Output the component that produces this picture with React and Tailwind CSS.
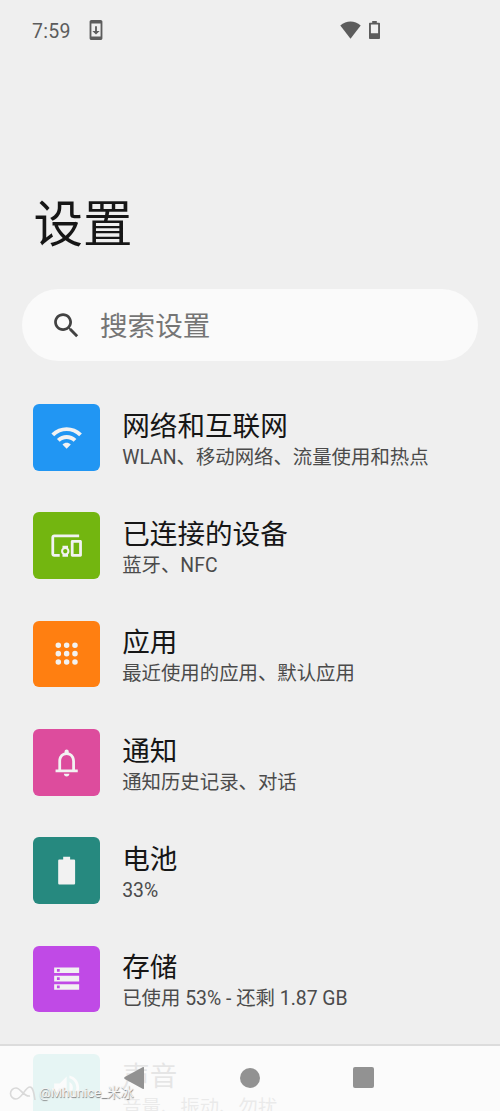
import { clsx } from "clsx";

const icons = {
  wifi: "M1 9l2 2c4.97-4.97 13.03-4.97 18 0l2-2C16.93 2.93 7.08 2.93 1 9zm8 8l3 3 3-3c-1.65-1.66-4.34-1.66-6 0zm-4-4l2 2c2.76-2.76 7.24-2.76 10 0l2-2C15.14 9.14 8.87 9.14 5 13z",
  devices:
    "M3 6h18V4H3c-1.1 0-2 .9-2 2v12c0 1.1.9 2 2 2h4v-2H3V6zm10 6H9v1.78c-.61.55-1 1.33-1 2.22s.39 1.67 1 2.22V20h4v-1.78c.61-.55 1-1.34 1-2.22s-.39-1.67-1-2.22V12zm-2 5.5c-.83 0-1.5-.67-1.5-1.5s.67-1.5 1.5-1.5 1.5.67 1.5 1.5-.67 1.5-1.5 1.5zM22 8h-6c-.5 0-1 .5-1 1v10c0 .5.5 1 1 1h6c.5 0 1-.5 1-1V9c0-.5-.5-1-1-1zm-1 10h-4v-8h4v8z",
  apps: "M6 4a2 2 0 1 0 0 4a2 2 0 1 0 0-4zM12 4a2 2 0 1 0 0 4a2 2 0 1 0 0-4zM18 4a2 2 0 1 0 0 4a2 2 0 1 0 0-4zM6 10a2 2 0 1 0 0 4a2 2 0 1 0 0-4zM12 10a2 2 0 1 0 0 4a2 2 0 1 0 0-4zM18 10a2 2 0 1 0 0 4a2 2 0 1 0 0-4zM6 16a2 2 0 1 0 0 4a2 2 0 1 0 0-4zM12 16a2 2 0 1 0 0 4a2 2 0 1 0 0-4zM18 16a2 2 0 1 0 0 4a2 2 0 1 0 0-4z",
  bell: "M18 17v-6c0-3.07-1.63-5.64-4.5-6.32V4c0-.83-.67-1.5-1.5-1.5s-1.5.67-1.5 1.5v.68C7.64 5.36 6 7.92 6 11v6H4v2h16v-2h-2zm-2 0H8v-6c0-2.48 1.51-4.5 4-4.5s4 2.02 4 4.5v6zm-4 5c1.1 0 2-.9 2-2h-4c0 1.1.9 2 2 2z",
  battery: "M17.2 4H14.5V2h-5v2H6.8c-.5 0-.9.4-.9.9v16.2c0 .5.4.9.9.9h10.4c.5 0 .9-.4.9-.9V4.9c0-.5-.4-.9-.9-.9z",
  storage: "M3 20h18v-4H3v4zm2-3h2v2H5v-2zM3 4v4h18V4H3zm4 3H5V5h2v2zm-4 7h18v-4H3v4zm2-3h2v2H5v-2z",
  sound:
    "M3 9v6h4l5 5V4L7 9H3zM16.5 12c0-1.77-1.02-3.29-2.5-4.03v8.05c1.48-.73 2.5-2.25 2.5-4.02zM14 3.23v2.06c2.89.86 5 3.54 5 6.71s-2.11 5.85-5 6.71v2.06c4.01-.91 7-4.49 7-8.77s-2.99-7.86-7-8.77z",
  search:
    "M15.5 14h-.79l-.28-.27C15.41 12.59 16 11.11 16 9.5 16 5.91 13.09 3 9.5 3S3 5.91 3 9.5 5.91 16 9.5 16c1.61 0 3.09-.59 4.23-1.57l.27.28v.79l5 4.99L20.49 19l-4.99-5zm-6 0C7.01 14 5 11.99 5 9.5S7.01 5 9.5 5 14 7.01 14 9.5 11.99 14 9.5 14z",
  update:
    "M17 1H7c-1.1 0-2 .9-2 2v18c0 1.1.9 2 2 2h10c1.1 0 2-.9 2-2V3c0-1.1-.9-2-2-2zm0 18H7V5h10v14zm-1-6h-3V8h-2v5H8l4 4 4-4z",
};

const settings = [
  { title: "网络和互联网", summary: "WLAN、移动网络、流量使用和热点", icon: "wifi", color: "bg-[#2196f3]" },
  { title: "已连接的设备", summary: "蓝牙、NFC", icon: "devices", color: "bg-[#73b610]" },
  { title: "应用", summary: "最近使用的应用、默认应用", icon: "apps", color: "bg-[#ff7f11]" },
  { title: "通知", summary: "通知历史记录、对话", icon: "bell", color: "bg-[#dd4c9d]" },
  { title: "电池", summary: "33%", icon: "battery", color: "bg-[#26897f]" },
  { title: "存储", summary: "已使用 53% - 还剩 1.87 GB", icon: "storage", color: "bg-[#c04ae6]" },
  { title: "声音", summary: "音量、振动、勿扰", icon: "sound", color: "bg-[#26b8a8]" },
];

const Icon = ({ name, className }) => (
  <svg viewBox="0 0 24 24" fill="currentColor" fillRule="evenodd" className={clsx("shrink-0", className)}>
    <path d={icons[name]} />
  </svg>
);

const StatusBar = () => (
  <header className="flex h-[60px] items-center pl-8 text-[#5c5c5c]">
    <span className="w-[53px] pt-[3px] text-[19.5px] tracking-[0.3px]">7:59</span>
    <Icon name="update" className="size-[22px]" />
    <svg viewBox="0 0 21 18" fill="currentColor" className="ml-[233px] h-[18px] w-[21px]">
      <path d="M.3 4.4C6.3-.9 14.7-.9 20.7 4.4L10.5 17.7z" />
    </svg>
    <svg viewBox="0 0 11 18" fill="currentColor" fillRule="evenodd" className="ml-[7.5px] h-[18px] w-[11px]">
      <path d="M3.2 0h4.6v1.7h2.1c.6 0 1.1.4 1.1 1v14.2c0 .6-.5 1.1-1.1 1.1H1.1C.5 18 0 17.5 0 16.9V2.7c0-.6.5-1 1.1-1h2.1zM1.9 3.5v8.8h7.2V3.5z" />
    </svg>
  </header>
);

const SettingRow = ({ title, summary, icon, color }) => (
  <li className="flex h-[108.35px] items-start gap-[22.5px]">
    <div className={clsx("flex size-[66.7px] shrink-0 items-center justify-center rounded-md text-[#f2f2f2]", color)}>
      <Icon name={icon} className="size-[33.3px]" />
    </div>
    <div className="whitespace-nowrap pt-[3.5px]">
      <h2 className="text-[27.6px] leading-[37px] text-[#161616]">{title}</h2>
      <p className="text-[19.4px] leading-[26.5px] text-[#4b4b4b]">{summary}</p>
    </div>
  </li>
);

const Watermark = () => (
  <div className="absolute bottom-2 left-[9px] flex items-center gap-[3px] text-[#f6f6f6] [text-shadow:0.5px_0.5px_1px_#777]">
    <svg viewBox="0 0 27 16" fill="none" stroke="#d9d9d9" strokeWidth="1.6" className="h-4 w-[27px]">
      <path d="M21 11C14 12 12 3 7 3a5.500 5.500 0 0 0 0 11c6 0 9-12 14-12c3 0 4 6 5 13" />
    </svg>
    <span className="text-[13.2px] leading-5">@Mhunice_米冰</span>
  </div>
);

const NavigationBar = () => (
  <nav className="absolute inset-x-0 bottom-0 h-[67px] border-t-2 border-[#dcdcdc] bg-[#fcfcfc]/90">
    <div className="flex h-[63px] items-center pl-[124px] text-[#929292]">
      <svg viewBox="0 0 20 22" fill="currentColor" className="h-[22px] w-5">
        <path d="M19 0q1-.3 1 1v20q0 1.3-1 1L.7 12q-1-1 0-2z" />
      </svg>
      <div className="ml-24 size-5 rounded-full bg-current" />
      <div className="ml-[93px] size-[21px] rounded-xs bg-current" />
    </div>
  </nav>
);

export default function App() {
  return (
    <div className="relative h-[1111px] w-[500px] overflow-hidden bg-[#efefef] font-[Roboto,'Noto_Sans_CJK_SC',sans-serif]">
      <StatusBar />
      <h1 className="mt-[128px] pl-[33.5px] text-[49.5px] leading-[74px] text-[#161616]">设置</h1>
      <div className="mx-[22px] mt-[27px] flex h-[72px] items-center gap-[17px] rounded-full bg-[#fafafa] pl-[28px]">
        <Icon name="search" className="size-[33px] text-[#424242]" />
        <span className="pt-[3px] text-[27.6px] leading-10 text-[#757575]">搜索设置</span>
      </div>
      <ul className="mt-[43px] pl-[33px]">
        {settings.map((item) => (
          <SettingRow key={item.title} {...item} />
        ))}
      </ul>
      <NavigationBar />
      <Watermark />
    </div>
  );
}
